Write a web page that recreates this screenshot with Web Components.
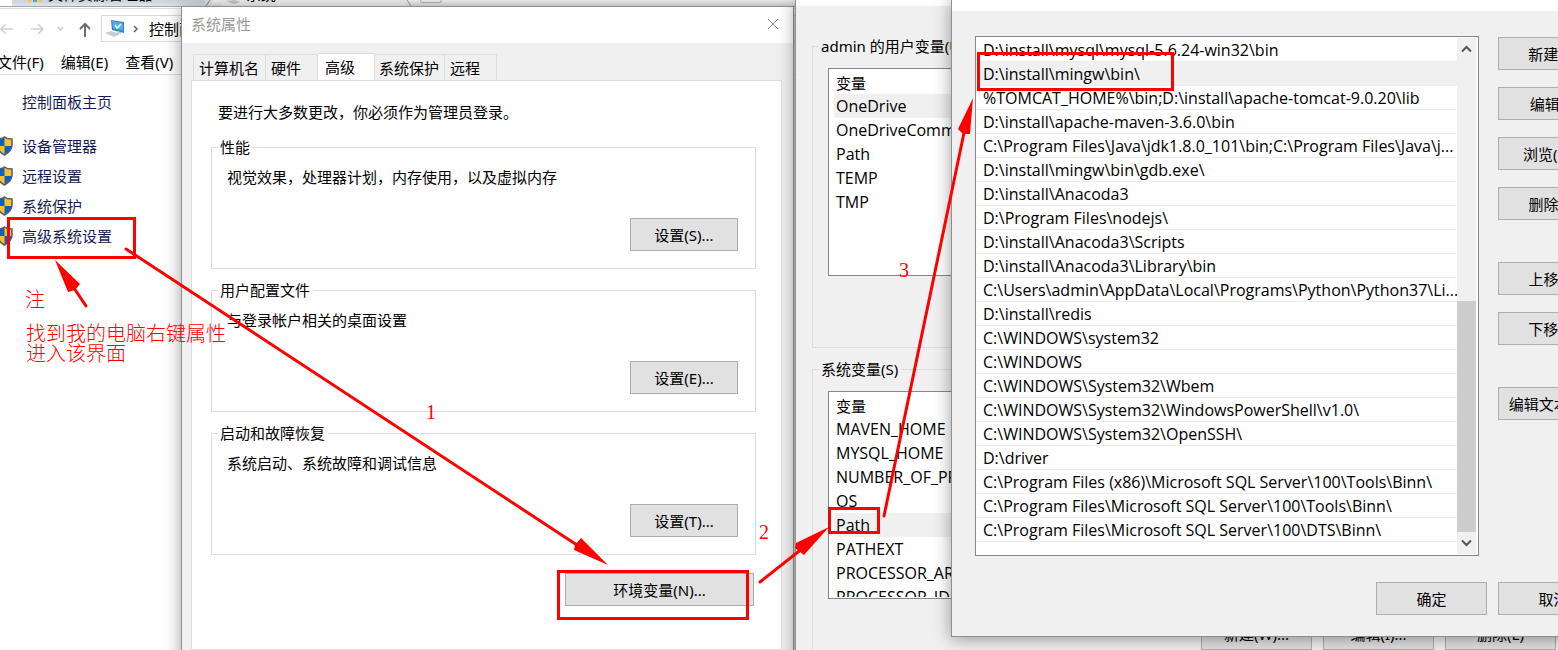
<!DOCTYPE html>
<html lang="zh-CN">
<head>
<meta charset="utf-8">
<title>系统属性</title>
<style>
  html, body {
    margin: 0;
    height: 100%;
    overflow: hidden;
  }
  body {
    font: 15px/20px "Noto Sans", "Noto Sans CJK SC", sans-serif;
    color: #000;
    background: #fff;
  }
</style>
</head>
<body>
<desktop-view></desktop-view>

<script>
  function define(name, html, setup) {
    customElements.define(name, class extends HTMLElement {
      constructor() {
        super();
        this.attachShadow({ mode: 'open' });
      }

      connectedCallback() {
        this.shadowRoot.innerHTML = html;
        if (setup) setup(this, this.shadowRoot);
      }
    });
  }

  // Push button
  define('win-button', `
    <style>
      :host { display: block; width: 108px; }
      button {
        box-sizing: border-box;
        width: 100%;
        height: 33px;
        padding: 0;
        border: 1px solid #adadad;
        background: #e1e1e1;
        font: inherit;
        color: inherit;
        white-space: nowrap;
      }
    </style>
    <button type="button"><slot></slot></button>
  `);

  // Titled frame around a set of controls
  define('group-box', `
    <style>
      :host { display: block; }
      fieldset {
        box-sizing: border-box;
        height: 100%;
        min-width: 0;
        margin: 0;
        padding: 0;
        border: 1px solid #dcdcdc;
      }
      legend {
        margin-left: 6px;
        padding: 0 3px 0 2px;
        white-space: nowrap;
      }
    </style>
    <fieldset><legend><slot name="label"></slot></legend><slot></slot></fieldset>
  `);

  // One section of the advanced tab: description and a settings button
  define('settings-section', `
    <style>
      :host { display: block; }
      group-box { height: 132px; }
      p { margin: 0; padding: 10px 15px 12px; }
      .row { display: flex; justify-content: flex-end; padding: 19px 17px 0; }
    </style>
    <group-box>
      <span slot="label"></span>
      <p></p>
      <div class="row"><win-button></win-button></div>
    </group-box>
  `, (host, root) => {
    root.querySelector('span').textContent = host.getAttribute('label');
    root.querySelector('p').textContent = host.getAttribute('text');
    root.querySelector('win-button').textContent = host.getAttribute('action');
  });

  define('app-window', `
    <style>
      :host {
        display: flex;
        flex-direction: column;
        box-sizing: border-box;
        border: 1px solid #8f8f8f;
        background: #f0f0f0;
        box-shadow: 0 2px 16px rgba(0, 0, 0, .38);
      }
      header {
        display: flex;
        flex: none;
        box-sizing: border-box;
        align-items: center;
        justify-content: space-between;
        height: var(--title-height, 36px);
        padding: 0 14px 2px 9px;
        overflow: hidden;
        background: #fff;
        color: #999;
      }
      button { display: flex; padding: 0; border: 0; background: none; }
    </style>
    <header>
      <span></span>
      <button type="button" aria-label="关闭">
        <svg width="12" height="12" fill="none" stroke="#8a8a8a"><path d="M1 1l10 10M11 1L1 11"/></svg>
      </button>
    </header>
    <slot></slot>
  `, (host, root) => {
    if (host.hasAttribute('label')) {
      root.querySelector('span').textContent = host.getAttribute('label');
    } else {
      root.querySelector('button').remove();
    }
  });

  // Control panel window behind the dialogs
  define('control-panel', `
    <style>
      :host { display: block; background: #fff; overflow: hidden; }
      .tabs {
        display: flex;
        align-items: flex-end;
        box-sizing: border-box;
        height: 7px;
        overflow: hidden;
        border-bottom: 1px solid #a2a5a9;
        background: linear-gradient(#f7f7f7, #e4e4e4);
        line-height: 18px;
      }
      .tabs svg { flex: none; }
      .tabs span { padding-bottom: 3px; }
      .tab { display: flex; flex: none; align-items: flex-end; gap: 6px; height: 6px; }
      .tab svg { align-self: flex-start; }
      .one { width: 177px; padding-left: 16px; background: linear-gradient(#cbd2dc, #dfe3ea); }
      .two { width: 180px; padding-left: 5px; background: #f2f2f2; }
      .three { width: 20px; height: 2px; align-self: flex-start; margin-left: 4px; border: 1px solid #b5b5b5; border-top: 0; border-radius: 0 0 3px 3px; }
      nav { display: flex; align-items: center; height: 27px; padding-top: 6px; border-top: 1px solid #ddd; margin-top: 1px; }
      nav > svg { flex: none; }
      .address {
        display: flex;
        flex: 1;
        align-items: center;
        box-sizing: border-box;
        height: 27px;
        margin-left: 10px;
        padding-left: 3px;
        border: 1px solid #d9d9d9;
      }
      .address span { margin-left: 6px; white-space: nowrap; }
      .menu {
        display: flex;
        gap: 17px;
        padding: 10px 0 2px;
        border-bottom: 1px solid #dcdcdc;
        margin-left: -3px;
      }
      .menu button { padding: 0; border: 0; background: none; font: inherit; color: inherit; }
      ul { margin: 0; padding: 17px 0 0; list-style: none; }
      li { display: flex; align-items: center; height: 30px; }
      li:first-child { height: 20px; margin-bottom: 19px; }
      li svg { flex: none; margin: 0 9px 0 -4px; }
      li:first-child a { margin-left: 22px; }
      a { color: #151c55; text-decoration: none; }
    </style>
    <div class="tabs">
      <svg width="12" height="6"><path fill="#fff" d="M0 0h12v6H0z"/></svg>
      <div class="tab one">
        <svg width="14" height="2"><path fill="#f2c94f" d="M0 0h4v2H0zM10 0h4v2h-4z"/><path fill="#5b9bd5" d="M5 0h4v2H5z"/></svg>
        <span>文件资源管理器</span>
      </div>
      <svg width="16" height="6"><path fill="#dfe3ea" d="M0 0h8L4 6H0z"/><path stroke="#888" fill="none" d="M5 0L1 6"/></svg>
      <div class="tab two">
        <svg width="14" height="4"><path fill="#c5cbd1" d="M0 1l9-1 5 2-6 2z"/></svg>
        <span>系统</span>
      </div>
      <svg width="10" height="6"><path stroke="#999" fill="none" d="M1 0l4 6"/></svg>
      <div class="three"></div>
    </div>
    <nav>
      <svg width="91" height="20" fill="none" stroke="#d0d0d0" stroke-width="1.5">
        <path d="M1 10h12M6 5l-5 5 5 5M31 10h12M38 5l5 5-5 5M58 8l2.500 3 2.500-3"/>
        <path stroke="#6d6d6d" stroke-width="2" d="M85 18V5M80 10l5-5 5 5"/>
      </svg>
      <div class="address">
        <svg width="22" height="20">
          <path fill="#3d7fb0" d="M6 1l13 2v11L7 11z"/>
          <path fill="#45b3f2" d="M7 2l11 2v8L8 9z"/>
          <path stroke="#fff" fill="none" stroke-width="1.500" d="M10 6l2 3 4-4"/>
          <path fill="#c5cdd5" d="M0 14l6-2 9 3-6 3zM11 12l5 1v2l-4-1z"/>
        </svg>
        <svg width="16" height="10" fill="none" stroke="#666" stroke-width="1.500"><path d="M7 2l3 3-3 3"/></svg>
        <span>控制面板</span>
      </div>
    </nav>
    <div class="menu">
      <button type="button">文件(F)</button>
      <button type="button">编辑(E)</button>
      <button type="button">查看(V)</button>
    </div>
    <ul>
      <li><a href="#">控制面板主页</a></li>
    </ul>
  `, (host, root) => {
    const list = root.querySelector('ul');
    ['设备管理器', '远程设置', '系统保护', '高级系统设置'].forEach((text) => {
      list.insertAdjacentHTML('beforeend', `
        <li>
          <svg width="17" height="20" viewBox="0 0 17 20">
            <path fill="#0a63c4" d="M8.500 1C6 3 3 3 1 3v6c0 5 4 8 7.500 10C12 17 16 14 16 9V3c-2 0-5 0-7.500-2z"/>
            <path fill="#fdbf2d" d="M8.500 1v9H16V3c-2 0-5 0-7.500-2zM8.500 10H1c1 5 4 7 7.500 9z"/>
            <path fill="none" stroke="#555b60" stroke-width="1.500" d="M8.500 1C6 3 3 3 1 3v6c0 5 4 8 7.500 10C12 17 16 14 16 9V3c-2 0-5 0-7.500-2z"/>
          </svg>
          <a href="#">${text}</a>
        </li>`);
    });
  });

  // System properties, advanced tab
  define('system-properties', `
    <style>
      :host { display: flex; flex: 1; flex-direction: column; padding: 10px 11px 0 9px; }
      .tabs { display: flex; align-items: flex-end; padding-left: 2px; }
      .tabs button {
        box-sizing: border-box;
        height: 26px;
        padding: 0 5px;
        border: 1px solid #dcdcdc;
        border-width: 1px 1px 0 0;
        background: #f0f0f0;
        font: inherit;
        color: inherit;
        text-align: left;
        white-space: nowrap;
      }
      .tabs button:first-child { width: 73px; border-left-width: 1px; }
      .tabs .short { width: 52px; }
      .tabs .current {
        width: 57px;
        height: 28px;
        margin-bottom: -1px;
        padding: 0 7px 2px;
        background: #fff;
      }
      .tabs .after { width: 70px; padding: 0 4px; }
      .page {
        display: flex;
        flex-direction: column;
        gap: 11px;
        flex: 1;
        box-sizing: border-box;
        padding: 21px 25px 0 19px;
        border: 1px solid #dcdcdc;
        background: #fff;
      }
      .hint { margin: 0 0 4px; padding-left: 7px; }
      .env { display: flex; justify-content: flex-end; padding: 7px 2px 0; }
      .env win-button { width: 189px; }
    </style>
    <div class="tabs" role="tablist">
      <button type="button" role="tab">计算机名</button>
      <button type="button" role="tab" class="short">硬件</button>
      <button type="button" role="tab" class="current" aria-selected="true">高级</button>
      <button type="button" role="tab" class="after">系统保护</button>
      <button type="button" role="tab" class="short">远程</button>
    </div>
    <div class="page">
      <p class="hint">要进行大多数更改，你必须作为管理员登录。</p>
      <settings-section label="性能" text="视觉效果，处理器计划，内存使用，以及虚拟内存" action="设置(S)..."></settings-section>
      <settings-section label="用户配置文件" text="与登录帐户相关的桌面设置" action="设置(E)..."></settings-section>
      <settings-section label="启动和故障恢复" text="系统启动、系统故障和调试信息" action="设置(T)..."></settings-section>
      <div class="env"><win-button>环境变量(N)...</win-button></div>
    </div>
  `);

  define('variable-table', `
    <style>
      :host {
        display: block;
        box-sizing: border-box;
        height: 208px;
        padding: 2px 2px 1px 5px;
        border: 1px solid #828790;
        background: #fff;
      }
      .clip { height: 100%; overflow: hidden; }
      table { width: 100%; border-collapse: collapse; }
      th, td { height: 24px; padding: 0 2px; font-weight: 400; text-align: left; white-space: nowrap; }
      th { height: 23px; }
      td { font: 16px/20px "Open Sans", "Noto Sans CJK SC", sans-serif; }
      .selected { background: #f0f0f0; }
    </style>
    <div class="clip">
      <table><thead><tr><th>变量</th></tr></thead><tbody></tbody></table>
    </div>
  `, (host, root) => {
    const body = root.querySelector('tbody');
    host.getAttribute('names').split(' ').forEach((name) => {
      const row = body.insertRow();
      row.insertCell().textContent = name;
      if (name === host.getAttribute('selected')) row.className = 'selected';
    });
  });

  define('environment-variables', `
    <style>
      :host { display: block; padding: 30px 16px 0; }
      variable-table { margin: 12px 15px 0; }
      .user { height: 312px; margin-bottom: 11px; }
      .system { height: 312px; }
      .row { display: flex; justify-content: flex-end; gap: 11px; padding: 18px 15px; }
      .row win-button { width: 111px; }
    </style>
    <group-box class="user">
      <span slot="label">admin 的用户变量(U)</span>
      <variable-table selected="OneDrive" names="OneDrive OneDriveCommercial Path TEMP TMP"></variable-table>
    </group-box>
    <group-box class="system">
      <span slot="label">系统变量(S)</span>
      <variable-table selected="Path" names="MAVEN_HOME MYSQL_HOME NUMBER_OF_PROCESSORS OS Path PATHEXT PROCESSOR_ARCHITECTURE PROCESSOR_IDENTIFIER"></variable-table>
      <div class="row">
        <win-button>新建(W)...</win-button>
        <win-button>编辑(I)...</win-button>
        <win-button>删除(L)</win-button>
      </div>
    </group-box>
  `);

  const paths = [
    'D:\\install\\mysql\\mysql-5.6.24-win32\\bin',
    'D:\\install\\mingw\\bin\\',
    '%TOMCAT_HOME%\\bin;D:\\install\\apache-tomcat-9.0.20\\lib',
    'D:\\install\\apache-maven-3.6.0\\bin',
    'C:\\Program Files\\Java\\jdk1.8.0_101\\bin;C:\\Program Files\\Java\\j...',
    'D:\\install\\mingw\\bin\\gdb.exe\\',
    'D:\\install\\Anacoda3',
    'D:\\Program Files\\nodejs\\',
    'D:\\install\\Anacoda3\\Scripts',
    'D:\\install\\Anacoda3\\Library\\bin',
    'C:\\Users\\admin\\AppData\\Local\\Programs\\Python\\Python37\\Li...',
    'D:\\install\\redis',
    'C:\\WINDOWS\\system32',
    'C:\\WINDOWS',
    'C:\\WINDOWS\\System32\\Wbem',
    'C:\\WINDOWS\\System32\\WindowsPowerShell\\v1.0\\',
    'C:\\WINDOWS\\System32\\OpenSSH\\',
    'D:\\driver',
    'C:\\Program Files (x86)\\Microsoft SQL Server\\100\\Tools\\Binn\\',
    'C:\\Program Files\\Microsoft SQL Server\\100\\Tools\\Binn\\',
    'C:\\Program Files\\Microsoft SQL Server\\100\\DTS\\Binn\\'
  ];

  // List of path entries with its scroll bar
  define('path-list', `
    <style>
      :host {
        display: flex;
        box-sizing: border-box;
        padding: 1px 2px 1px 1px;
        border: 1px solid #828790;
        background: #fff;
      }
      ul { flex: 1; min-width: 0; margin: 0; padding: 0 0 12px; list-style: none; }
      li {
        box-sizing: border-box;
        height: 24px;
        padding: 1px 0 0 6px;
        border-bottom: 1px solid #ededed;
        overflow: hidden;
        font: 16px/22px "Open Sans", "Noto Sans CJK SC", sans-serif;
        white-space: nowrap;
      }
      li.selected { background: #f0f0f0; }
      .bar { display: flex; flex-direction: column; width: 19px; background: #f0f0f0; }
      .bar button { display: flex; justify-content: center; align-items: center; height: 22px; padding: 0; border: 0; background: none; }
      .track { display: flex; flex: 1; align-items: flex-end; }
      .thumb { width: 100%; height: 49%; background: #cdcdcd; }
    </style>
    <ul role="listbox"></ul>
    <div class="bar">
      <button type="button" aria-label="向上滚动"><svg width="11" height="8" fill="none" stroke="#555" stroke-width="2"><path d="M1 6.500l4.500-4.500 4.500 4.500"/></svg></button>
      <div class="track"><div class="thumb"></div></div>
      <button type="button" aria-label="向下滚动"><svg width="11" height="8" fill="none" stroke="#555" stroke-width="2"><path d="M1 1.500l4.500 4.500 4.500-4.500"/></svg></button>
    </div>
  `, (host, root) => {
    const list = root.querySelector('ul');
    paths.forEach((path, i) => {
      const item = document.createElement('li');
      item.setAttribute('role', 'option');
      item.textContent = path;
      if (i === 1) item.className = 'selected';
      list.append(item);
    });
  });

  define('path-editor', `
    <style>
      :host { display: block; padding: 25px 23px 21px; }
      .main { display: flex; gap: 19px; }
      path-list { flex: 1; min-width: 0; }
      .side { display: flex; flex-direction: column; gap: 17px; padding-top: 1px; }
      .side .apart { margin-top: 25px; }
      win-button { width: 111px; }
      footer { display: flex; justify-content: flex-end; gap: 11px; margin-top: 26px; }
    </style>
    <div class="main">
      <path-list></path-list>
      <div class="side">
        <win-button>新建(N)</win-button>
        <win-button>编辑(E)</win-button>
        <win-button>浏览(B)...</win-button>
        <win-button>删除(D)</win-button>
        <win-button class="apart">上移(U)</win-button>
        <win-button>下移(O)</win-button>
        <win-button class="apart">编辑文本(T)...</win-button>
      </div>
    </div>
    <footer>
      <win-button>确定</win-button>
      <win-button>取消</win-button>
    </footer>
  `);

  // Red marks and notes drawn over the windows
  define('guide-marks', `
    <style>
      :host {
        display: block;
        font: 300 20px/20px "Liberation Serif", "Noto Sans CJK SC", serif;
        color: #f00;
        pointer-events: none;
      }
      svg { display: block; width: 100%; height: 100%; }
      p { position: absolute; margin: 0; white-space: nowrap; }
    </style>
    <svg fill="none" stroke="#f00" stroke-width="3">
      <rect x="8.500" y="218.500" width="126" height="39"/>
      <rect x="558.500" y="571.500" width="189" height="47"/>
      <rect x="829.500" y="508.500" width="49" height="24"/>
      <rect x="978.500" y="53.500" width="194" height="36"/>
      <path stroke-linecap="round" d="M86 306L72 285M126 249L580 547M760 582L803 548M884 516L965 128"/>
      <path fill="#f00" stroke="none" d="M55 260l25 24-5 6-7 2zM608 565l-34-15 1-5 6-7zM829 527l-25 28-9-7 1-5zM973 98l-3 36-7 0-5-5z"/>
    </svg>
    <p style="left: 25px; top: 290px">注</p>
    <p style="left: 26px; top: 324px">找到我的电脑右键属性<br>进入该界面</p>
    <p style="left: 426px; top: 402px">1</p>
    <p style="left: 759px; top: 522px">2</p>
    <p style="left: 899px; top: 260px">3</p>
  `);

  define('desktop-view', `
    <style>
      :host { display: block; position: relative; height: 100vh; overflow: hidden; }
      control-panel, app-window, guide-marks { position: absolute; }
      control-panel, guide-marks { inset: 0; }
      .system { left: 181px; top: 6px; width: 613px; min-height: 664px; }
      .variables { left: 795px; right: -31px; top: -1px; min-height: 700px; --title-height: 6px; }
      .editor { left: 951px; right: -75px; top: -1px; --title-height: 11px; }
      system-properties { flex: none; height: 597px; }
    </style>
    <control-panel></control-panel>
    <app-window class="system" label="系统属性"><system-properties></system-properties></app-window>
    <app-window class="variables"><environment-variables></environment-variables></app-window>
    <app-window class="editor"><path-editor></path-editor></app-window>
    <guide-marks></guide-marks>
  `);
</script>
</body>
</html>
